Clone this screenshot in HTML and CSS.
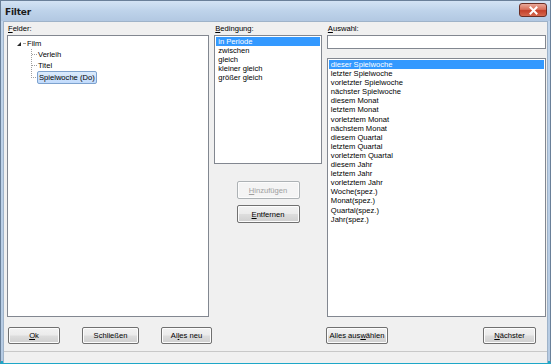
FILE: index.html
```html
<!DOCTYPE html>
<html>
<head>
<meta charset="utf-8">
<link rel="stylesheet" href="styles.css">
</head>
<body>
<div class="window">
  <div class="titlebar">
    <span class="title">Filter</span>
    <span class="close"><svg width="13" height="9" viewBox="0 0 13 9"><path d="M3.5 1.5 L9.5 7.5 M9.5 1.5 L3.5 7.5" stroke="#fff" stroke-width="2" stroke-linecap="square"/></svg></span>
  </div>
  <div class="client">
    <div class="columns">
      <div class="col col-fields">
        <div class="label"><u>F</u>elder:</div>
        <div class="box tree">
          <div class="node root"><span class="expander"></span><span class="dash"></span>Film</div>
          <div class="children">
            <div class="node child"><span class="branch"></span>Verleih</div>
            <div class="node child"><span class="branch"></span>Titel</div>
            <div class="node child last"><span class="branch"></span><span class="sel">Spielwoche (Do)</span></div>
          </div>
        </div>
      </div>
      <div class="col col-cond">
        <div class="label"><u>B</u>edingung:</div>
        <div class="box list cond-list">
          <div class="item selected">in Periode</div>
          <div class="item">zwischen</div>
          <div class="item">gleich</div>
          <div class="item">kleiner gleich</div>
          <div class="item">größer gleich</div>
        </div>
        <div class="mid-buttons">
          <button class="btn disabled"><u>H</u>inzufügen</button>
          <button class="btn"><u>E</u>ntfernen</button>
        </div>
      </div>
      <div class="col col-sel">
        <div class="label"><u>A</u>uswahl:</div>
        <div class="box input"></div>
        <div class="box list sel-list">
          <div class="item selected">dieser Spielwoche</div>
          <div class="item">letzter Spielwoche</div>
          <div class="item">vorletzter Spielwoche</div>
          <div class="item">nächster Spielwoche</div>
          <div class="item">diesem Monat</div>
          <div class="item">letztem Monat</div>
          <div class="item">vorletztem Monat</div>
          <div class="item">nächstem Monat</div>
          <div class="item">diesem Quartal</div>
          <div class="item">letztem Quartal</div>
          <div class="item">vorletztem Quartal</div>
          <div class="item">diesem Jahr</div>
          <div class="item">letztem Jahr</div>
          <div class="item">vorletztem Jahr</div>
          <div class="item">Woche(spez.)</div>
          <div class="item">Monat(spez.)</div>
          <div class="item">Quartal(spez.)</div>
          <div class="item">Jahr(spez.)</div>
        </div>
      </div>
    </div>
    <div class="footer">
      <div class="footer-left">
        <button class="btn b-ok"><u>O</u>k</button>
        <button class="btn b-close">Schließen</button>
        <button class="btn b-new">Al<u>l</u>es neu</button>
      </div>
      <div class="footer-right">
        <button class="btn b-all">Alles aus<u>w</u>ählen</button>
        <button class="btn b-next"><u>N</u>ächster</button>
      </div>
    </div>
    <div class="status"></div>
  </div>
</div>
</body>
</html>
```

FILE: styles.css
```css
* { box-sizing: border-box; }
html, body { margin: 0; padding: 0; }
body {
  width: 551px;
  height: 364px;
  overflow: hidden;
  font-family: "Liberation Sans", Arial, sans-serif;
  font-size: 7.6px;
  color: #000;
}
.window {
  width: 551px;
  height: 364px;
  display: flex;
  flex-direction: column;
  background: linear-gradient(#c2d6ec, #b6cbe3);
  border: 1px solid #6a8099;
  border-bottom: 3px solid #1ea7c8;
}
.titlebar {
  height: 20px;
  flex: none;
  display: flex;
  align-items: center;
  justify-content: space-between;
  padding: 0 3px 0 4px;
  background: linear-gradient(#d3e3f4 0%, #bed3ea 50%, #b2c8e2 100%);
}
.title {
  font-family: "DejaVu Sans", sans-serif;
  font-weight: bold;
  font-size: 9px;
  color: #1b1b1b;
  letter-spacing: -0.2px;
  margin-top: 1px;
}
.close {
  width: 28px;
  height: 14px;
  border: 1px solid #6b2e24;
  border-radius: 3px;
  background: linear-gradient(#e9a99a 0%, #d8705b 45%, #c4402a 55%, #d6694f 100%);
  display: flex;
  align-items: center;
  justify-content: center;
  margin-top: -2px;
}
.client {
  flex: 1;
  margin: 0 2px 0 2px;
  background: #f0f0f0;
  display: flex;
  flex-direction: column;
  border: 1px solid #9fb3c9;
  border-bottom: none;
}
.columns {
  flex: 1;
  display: flex;
  gap: 5px;
  padding: 1px 1px 0 3px;
}
.col { display: flex; flex-direction: column; }
.col-fields { width: 203px; }
.col-cond { width: 108px; }
.col-sel { width: 220px; }
.label {
  height: 12px;
  line-height: 12px;
  padding-left: 1px;
}
.box {
  background: #fff;
  border: 1px solid #828790;
}
.tree {
  height: 282px;
  padding: 2px 0 0 8px;
}
.node {
  height: 11px;
  line-height: 11px;
  display: flex;
  align-items: center;
  white-space: nowrap;
}
.expander {
  width: 0; height: 0;
  border-left: 4px solid transparent;
  border-bottom: 4px solid #262626;
  margin: 0 2px 0 1px;
}
.dash {
  width: 2px;
  border-top: 1px dotted #a0a0a0;
  margin-right: 2px;
}
.children {
  margin-left: 15px;
  border-left: 1px dotted #a0a0a0;
  height: 29px;
}
.child .branch {
  width: 5px;
  border-top: 1px dotted #a0a0a0;
  margin-right: 1px;
}
.sel {
  border: 1px solid #7da2ce;
  border-radius: 2px;
  background: linear-gradient(#dcebfc, #c1dbfc);
  padding: 0 1px;
  line-height: 11px;
}
.node.last { margin-top: 1px; margin-left: -1px; }
.list { padding: 1px; }
.item {
  height: 9.1px;
  line-height: 9px;
  padding-left: 2px;
  white-space: nowrap;
}
.item.selected { background: #3399ff; color: #fff; }
.cond-list { height: 129px; }
.mid-buttons {
  display: flex;
  flex-direction: column;
  align-items: center;
  gap: 6px;
  margin-top: 17px;
}
.mid-buttons .btn { width: 63px; height: 18px; }
.input { height: 14px; margin-bottom: 9px; }
.sel-list { height: 259px; }
.btn {
  font-family: "Liberation Sans", Arial, sans-serif;
  font-size: 7.6px;
  height: 17px;
  padding: 0;
  border: 1px solid #707070;
  border-radius: 2px;
  background: linear-gradient(#f2f2f2 0%, #ebebeb 48%, #dddddd 52%, #cfcfcf 100%);
  color: #000;
  box-shadow: inset 0 0 0 1px #fcfcfc;
}
.btn.disabled { color: #a0a0a0; border-color: #adb2b5; background: #f4f4f4; }
.footer {
  flex: none;
  display: flex;
  justify-content: space-between;
  padding: 10px 11px 0 4px;
  height: 34px;
}
.footer-left { display: flex; gap: 22px; }
.footer-right { display: flex; gap: 95px; }
.b-ok { width: 52px; }
.b-close { width: 57px; }
.b-new { width: 51px; }
.b-all { width: 62px; }
.b-next { width: 53px; }
.status {
  flex: none;
  height: 12px;
  border-top: 1px solid #c8c8c8;
  background: #f0f0f0;
}
```
